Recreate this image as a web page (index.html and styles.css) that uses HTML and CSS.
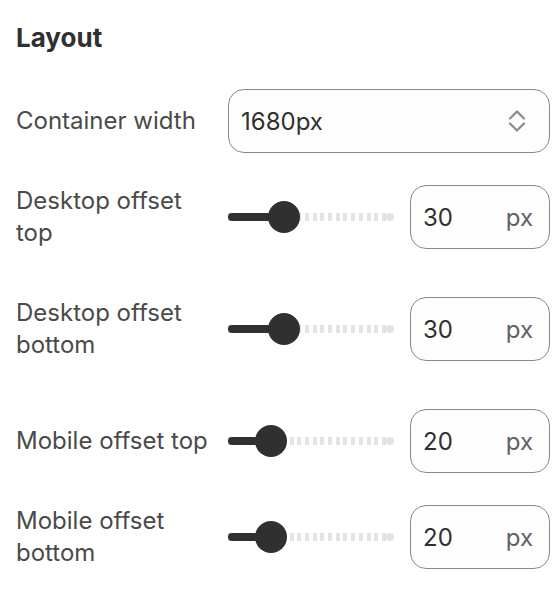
FILE: index.html
```html
<!DOCTYPE html>
<html lang="en">
<head>
    <meta charset="UTF-8">
    <title>Layout settings</title>
    <link rel="stylesheet" href="styles.css">
</head>
<body>
<div class="panel">
    <h2 class="panel__title">Layout</h2>

    <div class="setting">
        <label class="setting__label" for="container-width">Container width</label>
        <div class="select">
            <span class="select__value" id="container-width">1680px</span>
            <svg class="select__icon" width="20" height="26" viewBox="0 0 20 26" fill="none" stroke="#8a8a8a" stroke-width="2.2" stroke-linecap="round" stroke-linejoin="round">
                <path d="M3 10.5 L10 3.5 L17 10.5"/>
                <path d="M3 15.5 L10 22.5 L17 15.5"/>
            </svg>
        </div>
    </div>

    <div class="setting setting_spaced">
        <label class="setting__label">Desktop offset top</label>
        <div class="range">
            <div class="range__fill" style="width: 56px"></div>
            <div class="range__thumb" style="left: 40px"></div>
        </div>
        <div class="number">
            <span class="number__value">30</span>
            <span class="number__unit">px</span>
        </div>
    </div>

    <div class="setting setting_spaced">
        <label class="setting__label">Desktop offset bottom</label>
        <div class="range">
            <div class="range__fill" style="width: 56px"></div>
            <div class="range__thumb" style="left: 40px"></div>
        </div>
        <div class="number">
            <span class="number__value">30</span>
            <span class="number__unit">px</span>
        </div>
    </div>

    <div class="setting">
        <label class="setting__label">Mobile offset top</label>
        <div class="range">
            <div class="range__fill" style="width: 43px"></div>
            <div class="range__thumb" style="left: 27px"></div>
        </div>
        <div class="number">
            <span class="number__value">20</span>
            <span class="number__unit">px</span>
        </div>
    </div>

    <div class="setting">
        <label class="setting__label">Mobile offset bottom</label>
        <div class="range">
            <div class="range__fill" style="width: 43px"></div>
            <div class="range__thumb" style="left: 27px"></div>
        </div>
        <div class="number">
            <span class="number__value">20</span>
            <span class="number__unit">px</span>
        </div>
    </div>
</div>
</body>
</html>
```

FILE: styles.css
```css
* {
    box-sizing: border-box;
    font-family: Inter, 'Noto Sans', sans-serif;
}
body {
    margin: 0;
    background: #ffffff;
}
.panel {
    width: 560px;
    padding: 22px 10px 0 16px;
}
.panel__title {
    margin: 0 0 35px;
    color: #303030;
    font-size: 26px;
    font-weight: 700;
    line-height: 32px;
}
.setting {
    display: flex;
    align-items: center;
    gap: 16px;
    min-height: 64px;
    margin-bottom: 32px;
}
.setting_spaced {
    margin-bottom: 48px;
}
.setting__label {
    flex: 0 0 196px;
    color: #4a4a4a;
    font-size: 24px;
    line-height: 32px;
}
.select {
    flex: 1;
    display: flex;
    align-items: center;
    justify-content: space-between;
    height: 64px;
    padding: 0 22px 0 12px;
    border: 1px solid #8a8a8a;
    border-radius: 16px;
    background: #fdfdfd;
}
.select__value,
.number__value {
    color: #303030;
    font-size: 24px;
}
.range {
    position: relative;
    flex: 0 0 166px;
    height: 32px;
}
.range::before {
    content: '';
    position: absolute;
    left: 0;
    right: 4px;
    top: 12px;
    height: 8px;
    background: repeating-linear-gradient(90deg, #e3e3e3 0, #e3e3e3 4px, transparent 4px, transparent 7.7px);
}
.range::after {
    content: '';
    position: absolute;
    right: 0;
    top: 12px;
    width: 8px;
    height: 8px;
    border-radius: 4px;
    background: #e3e3e3;
}
.range__fill {
    position: absolute;
    left: 0;
    top: 12px;
    height: 8px;
    border-radius: 4px;
    background: #303030;
}
.range__thumb {
    position: absolute;
    top: 0;
    width: 32px;
    height: 32px;
    border-radius: 50%;
    background: #303030;
}
.number {
    flex: 0 0 140px;
    display: flex;
    align-items: center;
    justify-content: space-between;
    height: 64px;
    padding: 0 16px 0 12px;
    border: 1px solid #8a8a8a;
    border-radius: 16px;
    background: #fdfdfd;
}
.number__unit {
    color: #616161;
    font-size: 24px;
}
```
